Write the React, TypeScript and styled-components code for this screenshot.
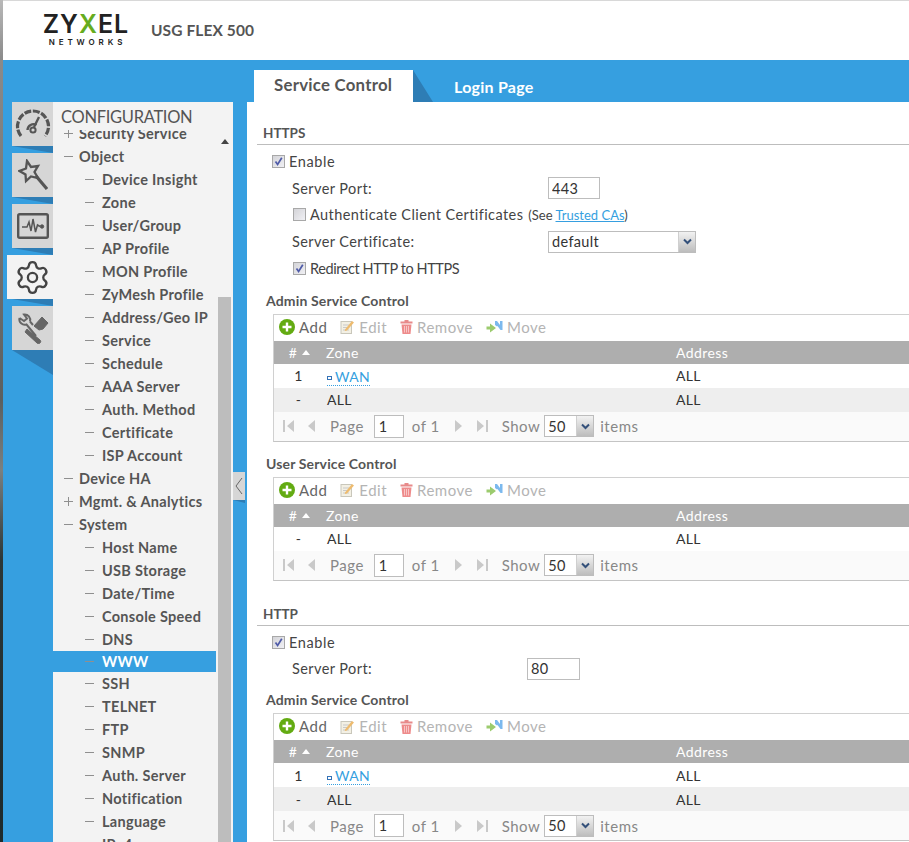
import styled, { createGlobalStyle } from "styled-components";
import { Settings } from "lucide-react";

const FONT = `Lato, "Open Sans", sans-serif`;

const GlobalStyle = createGlobalStyle`
    html, body {
        margin: 0;
        padding: 0;
        background: #fff;
    }
    body {
        font-family: ${FONT};
        color: #444;
    }
`;

const Page = styled.div`
    width: 909px;
    height: 842px;
    display: flex;
    overflow: hidden;
`;

const Strip = styled.div`
    width: 3px;
    flex: none;
    background: linear-gradient(#b9b9b9 0, #8a8a8a 60px, #5b5f60 400px, #7a8080 470px, #2c3637 560px, #1e2a2c 842px);
`;

const Main = styled.div`
    flex: 1;
    min-width: 0;
    display: flex;
    flex-direction: column;
    border-top: 1px solid #d8d8d8;
`;

const Header = styled.header`
    height: 59px;
    flex: none;
    background: #fff;
    display: flex;
    align-items: center;
    padding-left: 40px;
`;

const Logo = styled.div`
    display: flex;
    flex-direction: column;
    align-items: center;
    width: 86px;
    margin-top: -1px;
`;

const LogoWord = styled.div`
    font-size: 25px;
    line-height: 20px;
    font-weight: 600;
    letter-spacing: 1px;
    color: #222;
    font-family: "Inter", sans-serif;
    span {
        color: #66ac1e;
    }
`;

const LogoSub = styled.div`
    margin-top: 3px;
    font-size: 8px;
    line-height: 10px;
    font-weight: 600;
    letter-spacing: 3.9px;
    margin-right: -3px;
    color: #222;
    font-family: "Inter", sans-serif;
`;

const Model = styled.div`
    margin-left: 22px;
    font-size: 15.5px;
    font-weight: 700;
    color: #555;
    margin-top: -1px;
    letter-spacing: 0.1px;
`;

const Body = styled.div`
    flex: 1;
    min-height: 0;
    display: flex;
    background: #369fe0;
`;

const Side = styled.div`
    flex: none;
    margin-top: 42px;
    margin-left: 4px;
    display: flex;
`;

const Rail = styled.div`
    width: 46px;
    display: flex;
    flex-direction: column;
    align-items: flex-end;
`;

const RailTab = styled.div<{ $active?: boolean; $tail?: number }>`
    position: relative;
    width: ${(p) => (p.$active ? 46 : 41)}px;
    height: 44px;
    margin-bottom: 7px;
    padding-left: ${(p) => (p.$active ? 4 : 0)}px;
    box-sizing: border-box;
    background: ${(p) => (p.$active ? "#f3f3f3" : "#d6d6d6")};
    color: #555;
    display: flex;
    align-items: center;
    justify-content: center;
    &::after {
        content: "";
        position: absolute;
        right: 0;
        top: 44px;
        width: 41px;
        height: ${(p) => p.$tail ?? 7}px;
        background: #2e7db5;
        clip-path: polygon(0 0, 100% 0, 100% 100%);
    }
`;

const Panel = styled.div`
    width: 180px;
    height: 740px;
    background: #f3f3f3;
    display: flex;
    flex-direction: column;
    overflow: hidden;
`;

const PanelTitle = styled.div`
    height: 28px;
    flex: none;
    position: relative;
    z-index: 1;
    background: #f3f3f3;
    padding-left: 8px;
    font-size: 16.5px;
    line-height: 30px;
    color: #555;
    letter-spacing: -0.3px;
`;

const PanelBody = styled.div`
    flex: 1;
    min-height: 0;
    display: flex;
`;

const Menu = styled.div`
    width: 163px;
    flex: none;
    margin-top: -8px;
`;

const MenuRow = styled.div<{ $sub?: boolean; $active?: boolean }>`
    height: ${(p) => (p.$active ? 21 : 23)}px;
    display: flex;
    align-items: center;
    padding-left: ${(p) => (p.$sub ? 32 : 11)}px;
    background: ${(p) => (p.$active ? "#369fe0" : "transparent")};
    color: ${(p) => (p.$active ? "#fff" : "#555")};
    font-size: 14.5px;
    font-weight: 700;
    letter-spacing: 0.3px;
    white-space: nowrap;
`;

const MenuMark = styled.span<{ $sub?: boolean }>`
    width: 9px;
    margin-right: ${(p) => (p.$sub ? 8 : 6)}px;
    flex: none;
    height: 1px;
    background: #8f8f8f;
    position: relative;
`;

const MenuPlus = styled(MenuMark)`
    &::after {
        content: "";
        position: absolute;
        left: 4px;
        top: -4px;
        width: 1px;
        height: 9px;
        background: #8f8f8f;
    }
`;

const ScrollTrack = styled.div`
    width: 13px;
    flex: none;
    margin-left: 2px;
    display: flex;
    flex-direction: column;
    align-items: center;
`;

const ScrollArrow = styled.div`
    margin-top: 9px;
    width: 0;
    height: 0;
    border-left: 4px solid transparent;
    border-right: 4px solid transparent;
    border-bottom: 5px solid #444;
`;

const ScrollThumb = styled.div`
    margin-top: 153px;
    flex: 1;
    width: 13px;
    background: #bdbdbd;
`;

const Gutter = styled.div`
    width: 14px;
    flex: none;
    padding-top: 370px;
`;

const Collapse = styled.div`
    position: relative;
    width: 12px;
    height: 28px;
    background: #d6d6d6;
    display: flex;
    align-items: center;
    justify-content: center;
    &::after {
        content: "";
        position: absolute;
        left: 0;
        top: 28px;
        width: 12px;
        height: 3px;
        background: #2e7db5;
        clip-path: polygon(0 0, 100% 0, 100% 100%);
    }
`;

const Right = styled.div`
    flex: 1;
    min-width: 0;
    display: flex;
    flex-direction: column;
`;

const Tabs = styled.div`
    height: 42px;
    flex: none;
    display: flex;
    align-items: flex-end;
    padding-left: 7px;
`;

const ActiveTab = styled.div`
    position: relative;
    width: 159px;
    height: 32px;
    background: #fff;
    color: #555;
    font-size: 16.8px;
    font-weight: 700;
    line-height: 30px;
    padding-left: 20px;
    box-sizing: border-box;
    letter-spacing: 0.25px;
    &::after {
        content: "";
        position: absolute;
        left: 159px;
        top: 0;
        width: 20px;
        height: 32px;
        background: #2e7db5;
        clip-path: polygon(0 0, 100% 100%, 0 100%);
    }
`;

const Tab = styled.div`
    margin-left: 41px;
    height: 32px;
    line-height: 34px;
    color: #fff;
    font-size: 16px;
    font-weight: 700;
    letter-spacing: 0.25px;
`;

const Content = styled.main`
    flex: 1;
    min-height: 0;
    background: #fff;
    overflow: hidden;
    padding: 21px 0 0 10px;
`;

const SectionTitle = styled.h3<{ $gap?: number }>`
    margin: ${(p) => p.$gap ?? 0}px 0 0;
    height: 21px;
    padding-left: 6px;
    line-height: 20px;
    font-size: 13.5px;
    font-weight: 700;
    color: #555;
    border-bottom: 1px solid #bdbdbd;
`;

const Form = styled.div<{ $bottom?: number }>`
    padding-top: 3px;
    margin-bottom: ${(p) => p.$bottom ?? 0}px;
    display: flex;
    flex-direction: column;
`;

const FormRow = styled.div<{ $indent: number; $spacing?: number }>`
    height: 26.75px;
    display: flex;
    align-items: center;
    padding-left: ${(p) => p.$indent}px;
    font-size: 14.5px;
    letter-spacing: ${(p) => p.$spacing ?? 0.42}px;
    color: #444;
`;

const FieldLabel = styled.div<{ $width: number }>`
    width: ${(p) => p.$width}px;
    flex: none;
`;

const Check = styled.span`
    width: 13px;
    height: 13px;
    box-sizing: border-box;
    flex: none;
    margin-right: 4px;
    border: 1px solid #a8a8a8;
    background: linear-gradient(135deg, #d4d4d8, #f0f0f4);
    display: inline-flex;
    align-items: center;
    justify-content: center;
`;

const TextInput = styled.input<{ $width: number }>`
    width: ${(p) => p.$width}px;
    height: 22px;
    box-sizing: border-box;
    border: 1px solid #bdbdbd;
    padding: 0 3px;
    font: 14.5px ${FONT};
    letter-spacing: 0.3px;
    color: #333;
    outline: none;
    border-radius: 0;
`;

const Note = styled.span`
    margin-left: 5px;
    font-size: 13px;
    letter-spacing: 0;
    a {
        color: #369fe0;
        text-decoration: underline;
    }
`;

const Dropdown = styled.div<{ $width: number; $height: number }>`
    width: ${(p) => p.$width}px;
    height: ${(p) => p.$height}px;
    box-sizing: border-box;
    border: 1px solid #bdbdbd;
    display: flex;
    align-items: center;
    justify-content: space-between;
    padding-left: 3px;
    font-size: 14.5px;
    letter-spacing: 0.35px;
    color: #333;
    background: #fff;
`;

const DropArrow = styled.span`
    width: 16px;
    height: 100%;
    display: flex;
    align-items: center;
    justify-content: center;
    border-left: 1px solid #cfcfcf;
    background: linear-gradient(#f2f2f2, #bdbdbd);
`;

const GridTitle = styled.div`
    margin: 6px 0 0 9px;
    height: 26px;
    line-height: 26px;
    font-size: 14px;
    font-weight: 700;
    letter-spacing: 0.15px;
    color: #555;
`;

const Grid = styled.div`
    margin: 0 -12px 9px 16px;
    border: 1px solid #d0d0d0;
    border-bottom-color: #c4c4c4;
`;

const Toolbar = styled.div`
    height: 26px;
    box-sizing: border-box;
    padding: 0 0 2px 5px;
    display: flex;
    align-items: center;
`;

const ToolButton = styled.div<{ $off?: boolean }>`
    display: flex;
    align-items: center;
    gap: 4px;
    margin-right: 13px;
    font-size: 15px;
    letter-spacing: 0.5px;
    color: ${(p) => (p.$off ? "#b4b4b4" : "#666")};
`;

const Cols = styled.div`
    display: grid;
    grid-template-columns: 52px 350px 1fr;
    align-items: center;
`;

const HeadRow = styled(Cols)`
    height: 23px;
    background: #aeaeae;
    color: #fff;
    font-size: 14px;
    letter-spacing: 0.4px;
`;

const BodyRow = styled(Cols)<{ $shade?: boolean }>`
    height: 24px;
    background: ${(p) => (p.$shade ? "#eeeeee" : "#fff")};
    font-size: 14px;
    letter-spacing: 0.3px;
    color: #333;
`;

const NumCell = styled.div`
    text-align: center;
    padding-right: 3px;
`;

const SortCell = styled.div`
    display: flex;
    align-items: center;
    justify-content: center;
    gap: 5px;
    padding-right: 1px;
`;

const SortUp = styled.span`
    width: 0;
    height: 0;
    border-left: 4px solid transparent;
    border-right: 4px solid transparent;
    border-bottom: 5px solid #fff;
`;

const ZoneLink = styled.span`
    display: inline-flex;
    align-items: center;
    gap: 3px;
    margin-left: 1px;
    color: #369fe0;
    border-bottom: 1px dotted #369fe0;
    line-height: 16px;
`;

const ZoneDot = styled.span`
    width: 5px;
    height: 4px;
    box-sizing: border-box;
    border: 1px solid #3573b8;
    margin-top: 3px;
`;

const ZoneName = styled.span`
    margin-left: 1px;
`;

const Pager = styled.div`
    height: 29px;
    display: flex;
    align-items: center;
    padding-left: 9px;
    background: #fafafa;
    font-size: 15px;
    letter-spacing: 0.5px;
    color: #888;
`;

const PagerItem = styled.span<{ $left: number }>`
    margin-left: ${(p) => p.$left}px;
    display: inline-flex;
    align-items: center;
`;

const PageInput = styled.input`
    margin-left: 10px;
    width: 30px;
    height: 23px;
    box-sizing: border-box;
    border: 1px solid #bdbdbd;
    padding: 0 4px;
    font: 14.5px ${FONT};
    color: #333;
    outline: none;
    border-radius: 0;
`;

const CheckMark = () => (
    <svg width="11" height="11" viewBox="0 0 11 11">
        <path d="M2.500 5.500 L4.600 8.500 L8.800 1.800" fill="none" stroke="#4f5ba8" strokeWidth="1.700" />
    </svg>
);

const Chevron = () => (
    <svg width="9" height="7" viewBox="0 0 9 7">
        <path d="M1 1.500 L4.500 5 L8 1.500" fill="none" stroke="#33507a" strokeWidth="2" />
    </svg>
);

const GaugeIcon = () => (
    <svg width="36" height="32" viewBox="0 0 36 32" fill="none" stroke="#555" strokeWidth="3.200">
        <path d="M6 28 C2 23 1.500 17 4 12 C7 6 12 3 18 3 C24 3 29 6 32 12 C34.500 17 34 23 30 28" strokeDasharray="7 1.600" />
        <path d="M12.500 22 a6 6 0 0 1 9 -5" strokeWidth="2.400" />
        <circle cx="18" cy="22" r="2.600" strokeWidth="2" />
        <path d="M19 19 L24 9" strokeWidth="2.400" />
    </svg>
);

const WandIcon = () => (
    <svg width="30" height="32" viewBox="0 0 30 32" fill="none" stroke="#555" strokeWidth="2.300" strokeLinejoin="miter">
        <path d="M9 2 L13 8 L20 7 L16.500 13 L20 19 L13 17.500 L8 22 L7.500 15.500 L1.500 12 L8 9.500 Z" />
        <path d="M18 17 L29 30" strokeWidth="3.200" />
    </svg>
);

const PulseIcon = () => (
    <svg width="32" height="26" viewBox="0 0 32 26" fill="none" stroke="#555">
        <rect x="1.200" y="1.200" width="29.600" height="23.600" rx="1.500" strokeWidth="2.400" />
        <path d="M5 14 L10 14 L12 9 L14 18 L16 6 L18.500 19 L20.500 12 L23 13.500" strokeWidth="1.500" />
        <circle cx="25" cy="13.500" r="1.700" fill="#555" />
    </svg>
);

const ToolsIcon = () => (
    <svg width="32" height="32" viewBox="0 0 32 32" fill="none" stroke="#666">
        <path d="M2.500 6 a5.500 5.500 0 0 0 7 6.500 L19 24 M13 9.500 A5.500 5.500 0 0 0 7 2.500 L10 6.500 L7 9 L2.500 6 M13 9.500 L16 13" strokeWidth="2" />
        <path d="M17 14 L25 5 L31 11 L26 17 L22 18 Z" fill="#666" strokeWidth="1" />
        <path d="M10 17 L23 28 a2 2 0 0 1 -3 3 L8 20 Z" fill="#666" strokeWidth="1" />
    </svg>
);

const AddIcon = () => (
    <svg width="16" height="16" viewBox="0 0 16 16">
        <circle cx="8" cy="8" r="8" fill="#63ab12" />
        <path d="M8 3.500 V12.500 M3.500 8 H12.500" stroke="#fff" strokeWidth="2.400" />
    </svg>
);

const EditIcon = () => (
    <svg width="15" height="15" viewBox="0 0 15 15">
        <rect x="1" y="2.500" width="10.500" height="12" fill="#f3f0e4" stroke="#c9c7bb" />
        <path d="M3 6 H9 M3 8.500 H8 M3 11 H9" stroke="#c9c9c9" />
        <path d="M5 10.500 L12 2 L14 3.500 L7 11.500 L4.800 12 Z" fill="#eebb6e" />
    </svg>
);

const TrashIcon = () => (
    <svg width="13" height="15" viewBox="0 0 13 15">
        <path d="M4.500 1 H8.500 V2.500 H12.500 V4.500 H0.500 V2.500 H4.500 Z" fill="#e88a8a" />
        <path d="M1.500 5.500 H11.500 L10.500 15 H2.500 Z" fill="#ee8b8b" />
        <path d="M4.500 7 V13.500 M6.500 7 V13.500 M8.500 7 V13.500" stroke="#f8c6c6" />
    </svg>
);

const MoveIcon = () => (
    <svg width="17" height="14" viewBox="0 0 17 14">
        <path d="M0.500 6.500 H4 V3.500 L10 8 L4 12.500 V9.500 H0.500 Z" fill="#9ccb6e" />
        <path d="M9 1 H11 L14 5 V1 H16.500 V10 H14.500 L11.500 6 L11 6.500 L9 5 Z" fill="#7cb9ee" />
    </svg>
);

const PagerGlyph = ({ d, width }: { d: string; width: number }) => (
    <svg width={width} height="14" viewBox={`0 0 ${width} 14`}>
        <path d={d} fill="#c9c9c9" />
    </svg>
);

const PagerBar = () => (
    <Pager>
        <PagerItem $left={0}>
            <PagerGlyph width={11} d="M0 1 H2 V13 H0 Z M11 1 V13 L4 7 Z" />
        </PagerItem>
        <PagerItem $left={13}>
            <PagerGlyph width={8} d="M8 1 V13 L1 7 Z" />
        </PagerItem>
        <PagerItem $left={15}>Page</PagerItem>
        <PageInput defaultValue="1" />
        <PagerItem $left={8}>of 1</PagerItem>
        <PagerItem $left={15}>
            <PagerGlyph width={8} d="M0 1 V13 L7 7 Z" />
        </PagerItem>
        <PagerItem $left={14}>
            <PagerGlyph width={11} d="M0 1 V13 L7 7 Z M9 1 H11 V13 H9 Z" />
        </PagerItem>
        <PagerItem $left={14}>Show</PagerItem>
        <PagerItem $left={4}>
            <Dropdown $width={50} $height={22}>
                50
                <DropArrow>
                    <Chevron />
                </DropArrow>
            </Dropdown>
        </PagerItem>
        <PagerItem $left={6}>items</PagerItem>
    </Pager>
);

type Row = { num: string; zone: string; link?: boolean };

const ServiceGrid = ({ title, rows }: { title: string; rows: Row[] }) => (
    <>
        <GridTitle>{title}</GridTitle>
        <Grid>
            <Toolbar>
                <ToolButton>
                    <AddIcon />
                    Add
                </ToolButton>
                <ToolButton $off>
                    <EditIcon />
                    Edit
                </ToolButton>
                <ToolButton $off>
                    <TrashIcon />
                    Remove
                </ToolButton>
                <ToolButton $off>
                    <MoveIcon />
                    Move
                </ToolButton>
            </Toolbar>
            <HeadRow>
                <SortCell>
                    #
                    <SortUp />
                </SortCell>
                <div>Zone</div>
                <div>Address</div>
            </HeadRow>
            {rows.map((row, i) => (
                <BodyRow key={i} $shade={i % 2 === 1}>
                    <NumCell>{row.num}</NumCell>
                    <div>
                        {row.link ? (
                            <ZoneLink>
                                <ZoneDot />
                                {row.zone}
                            </ZoneLink>
                        ) : (
                            <ZoneName>{row.zone}</ZoneName>
                        )}
                    </div>
                    <div>ALL</div>
                </BodyRow>
            ))}
            <PagerBar />
        </Grid>
    </>
);

const menu: { label: string; sub?: boolean; plus?: boolean; active?: boolean }[] = [
    { label: "Security Service", plus: true },
    { label: "Object" },
    { label: "Device Insight", sub: true },
    { label: "Zone", sub: true },
    { label: "User/Group", sub: true },
    { label: "AP Profile", sub: true },
    { label: "MON Profile", sub: true },
    { label: "ZyMesh Profile", sub: true },
    { label: "Address/Geo IP", sub: true },
    { label: "Service", sub: true },
    { label: "Schedule", sub: true },
    { label: "AAA Server", sub: true },
    { label: "Auth. Method", sub: true },
    { label: "Certificate", sub: true },
    { label: "ISP Account", sub: true },
    { label: "Device HA" },
    { label: "Mgmt. & Analytics", plus: true },
    { label: "System" },
    { label: "Host Name", sub: true },
    { label: "USB Storage", sub: true },
    { label: "Date/Time", sub: true },
    { label: "Console Speed", sub: true },
    { label: "DNS", sub: true },
    { label: "WWW", sub: true, active: true },
    { label: "SSH", sub: true },
    { label: "TELNET", sub: true },
    { label: "FTP", sub: true },
    { label: "SNMP", sub: true },
    { label: "Auth. Server", sub: true },
    { label: "Notification", sub: true },
    { label: "Language", sub: true },
    { label: "IPv4", sub: true },
];

export default function App() {
    const adminRows: Row[] = [
        { num: "1", zone: "WAN", link: true },
        { num: "-", zone: "ALL" },
    ];

    return (
        <Page>
            <GlobalStyle />
            <Strip />
            <Main>
                <Header>
                    <Logo>
                        <LogoWord>
                            ZY<span>X</span>EL
                        </LogoWord>
                        <LogoSub>NETWORKS</LogoSub>
                    </Logo>
                    <Model>USG FLEX 500</Model>
                </Header>
                <Body>
                    <Side>
                        <Rail>
                            <RailTab>
                                <GaugeIcon />
                            </RailTab>
                            <RailTab>
                                <WandIcon />
                            </RailTab>
                            <RailTab>
                                <PulseIcon />
                            </RailTab>
                            <RailTab $active>
                                <Settings size={37} strokeWidth={1.5} color="#444" />
                            </RailTab>
                            <RailTab $tail={25}>
                                <ToolsIcon />
                            </RailTab>
                        </Rail>
                        <Panel>
                            <PanelTitle>CONFIGURATION</PanelTitle>
                            <PanelBody>
                                <Menu>
                                    {menu.map((item) => (
                                        <MenuRow key={item.label} $sub={item.sub} $active={item.active}>
                                            {item.plus ? <MenuPlus /> : <MenuMark $sub={item.sub} />}
                                            {item.label}
                                        </MenuRow>
                                    ))}
                                </Menu>
                                <ScrollTrack>
                                    <ScrollArrow />
                                    <ScrollThumb />
                                </ScrollTrack>
                            </PanelBody>
                        </Panel>
                        <Gutter>
                            <Collapse>
                                <svg width="8" height="18" viewBox="0 0 8 18">
                                    <path d="M7 1 L1 9 L7 17" fill="none" stroke="#666" strokeWidth="1" />
                                </svg>
                            </Collapse>
                        </Gutter>
                    </Side>
                    <Right>
                        <Tabs>
                            <ActiveTab>Service Control</ActiveTab>
                            <Tab>Login Page</Tab>
                        </Tabs>
                        <Content>
                            <SectionTitle>HTTPS</SectionTitle>
                            <Form>
                                <FormRow $indent={15} $spacing={0.6}>
                                    <Check>
                                        <CheckMark />
                                    </Check>
                                    Enable
                                </FormRow>
                                <FormRow $indent={35}>
                                    <FieldLabel $width={256}>Server Port:</FieldLabel>
                                    <TextInput $width={52} defaultValue="443" />
                                </FormRow>
                                <FormRow $indent={36}>
                                    <Check />
                                    Authenticate Client Certificates
                                    <Note>
                                        (See <a>Trusted CAs</a>)
                                    </Note>
                                </FormRow>
                                <FormRow $indent={35}>
                                    <FieldLabel $width={256}>Server Certificate:</FieldLabel>
                                    <Dropdown $width={148} $height={22}>
                                        default
                                        <DropArrow>
                                            <Chevron />
                                        </DropArrow>
                                    </Dropdown>
                                </FormRow>
                                <FormRow $indent={36} $spacing={-0.42}>
                                    <Check>
                                        <CheckMark />
                                    </Check>
                                    Redirect HTTP to HTTPS
                                </FormRow>
                            </Form>
                            <ServiceGrid title="Admin Service Control" rows={adminRows} />
                            <ServiceGrid title="User Service Control" rows={[{ num: "-", zone: "ALL" }]} />
                            <SectionTitle $gap={23}>HTTP</SectionTitle>
                            <Form $bottom={-1}>
                                <FormRow $indent={15} $spacing={0.6}>
                                    <Check>
                                        <CheckMark />
                                    </Check>
                                    Enable
                                </FormRow>
                                <FormRow $indent={35}>
                                    <FieldLabel $width={235}>Server Port:</FieldLabel>
                                    <TextInput $width={53} defaultValue="80" />
                                </FormRow>
                            </Form>
                            <ServiceGrid title="Admin Service Control" rows={adminRows} />
                        </Content>
                    </Right>
                </Body>
            </Main>
        </Page>
    );
}
